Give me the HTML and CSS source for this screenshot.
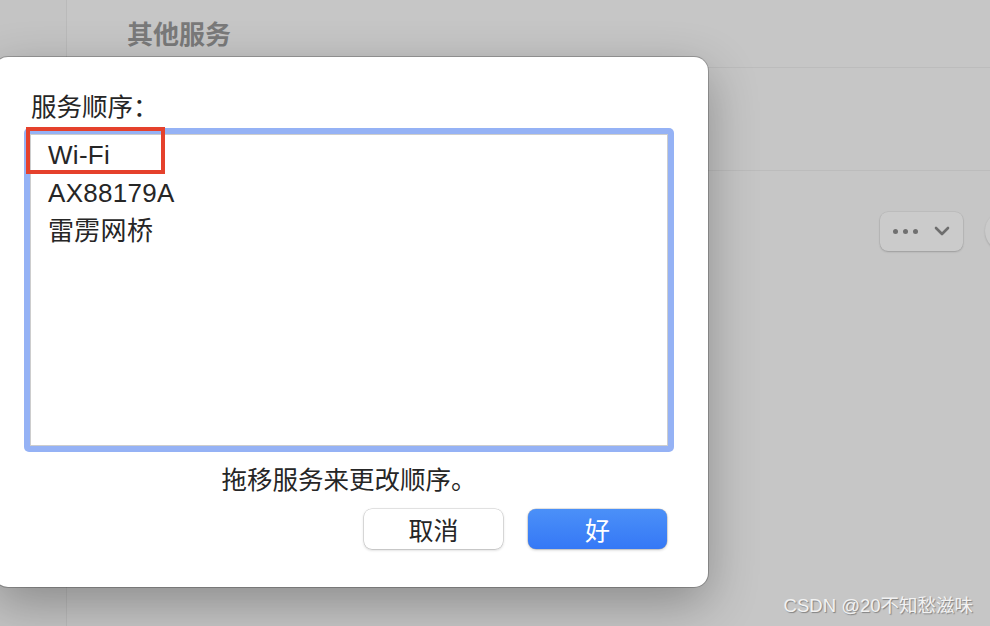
FILE: index.html
```html
<!DOCTYPE html>
<html lang="zh-CN">
<head>
    <meta charset="UTF-8">
    <meta name="viewport" content="width=device-width, initial-scale=1.0">
    <title>服务顺序</title>
    <link rel="stylesheet" href="styles.css">
</head>
<body>

    <div class="app">
        <div class="sidebar"></div>
        <div class="main">
            <div class="main-head">
                <h1>其他服务</h1>
            </div>
            <div class="row"></div>
            <div class="row-actions">
                <button class="more-btn">
                    <span class="dots"><i></i><i></i><i></i></span>
                    <svg width="16" height="10" viewBox="0 0 16 10"><path d="M2 2 L8 8 L14 2" fill="none" stroke="#6e6e6e" stroke-width="2.6" stroke-linecap="round" stroke-linejoin="round"/></svg>
                </button>
                <div class="help-btn"></div>
            </div>
        </div>
    </div>

    <!-- Feuille "ordre des services" -->
    <div class="sheet">
        <p class="sheet-title">服务顺序：</p>
        <div class="list-ring">
            <ul class="service-list">
                <li>Wi-Fi</li>
                <li>AX88179A</li>
                <li>雷雳网桥</li>
            </ul>
        </div>
        <p class="hint">拖移服务来更改顺序。</p>
        <div class="sheet-buttons">
            <button class="btn">取消</button>
            <button class="btn btn-primary">好</button>
        </div>
    </div>

    <div class="mark"></div>

    <div class="watermark">CSDN @20不知愁滋味</div>

</body>
</html>
```

FILE: styles.css
```css
body {
    margin: 0;
    width: 990px;
    height: 626px;
    overflow: hidden;
    position: relative;
    background-color: #c6c6c6;
    font-family: "Liberation Sans", "Noto Sans CJK SC", sans-serif;
    color: #262626;
}

.app {
    display: flex;
    height: 626px;
}

.sidebar {
    width: 66px;
    flex-shrink: 0;
    border-right: 1px solid #bababa;
    background-color: #c4c4c4;
}

.main {
    flex: 1;
    display: flex;
    flex-direction: column;
}

.main-head {
    height: 68px;
    box-sizing: border-box;
    padding: 17px 0 0 60px;
    border-bottom: 1px solid #bcbcbc;
}

.main-head h1 {
    margin: 0;
    font-family: "Noto Sans CJK SC", sans-serif;
    font-size: 26px;
    line-height: 32px;
    font-weight: bold;
    color: #7a7a7a;
}

.row {
    height: 102px;
    border-bottom: 1px solid #bcbcbc;
}

.row-actions {
    display: flex;
    justify-content: flex-end;
    align-items: center;
    gap: 22px;
    padding-top: 40px;
    margin-right: -35px;
}

.more-btn {
    width: 83px;
    height: 39px;
    border: none;
    border-radius: 8px;
    background-color: #cbcbcb;
    box-shadow: 0 1px 2px rgba(0, 0, 0, 0.18), 0 0 0 0.5px rgba(0, 0, 0, 0.08);
    display: flex;
    align-items: center;
    justify-content: center;
    gap: 16px;
    padding: 0;
}

.dots {
    display: flex;
    gap: 5px;
}

.dots i {
    width: 5px;
    height: 5px;
    border-radius: 50%;
    background-color: #707070;
}

.help-btn {
    width: 40px;
    height: 40px;
    flex-shrink: 0;
    border-radius: 50%;
    background-color: #cbcbcb;
    box-shadow: 0 1px 2px rgba(0, 0, 0, 0.18);
}

/* Feuille de dialogue */
.sheet {
    position: absolute;
    left: -6px;
    top: 57px;
    width: 714px;
    height: 530px;
    box-sizing: border-box;
    padding: 32px 34px 0 30px;
    background-color: #fff;
    border-radius: 14px;
    box-shadow: 0 0 0 1px rgba(0, 0, 0, 0.22), 0 16px 50px rgba(0, 0, 0, 0.3);
    font-family: "Noto Sans CJK SC", sans-serif;
}

.sheet-title {
    margin: 0 0 8px 7px;
    font-size: 25.5px;
    line-height: 31px;
}

.list-ring {
    height: 324px;
    box-sizing: border-box;
    padding: 6px;
    border-radius: 5px;
    background-color: #95b2f5;
}

.service-list {
    list-style: none;
    margin: 0;
    height: 100%;
    box-sizing: border-box;
    padding: 1px 0 0 17px;
    background-color: #fff;
    border: 1px solid #cdcdcd;
    font-family: "Liberation Sans", "Noto Sans CJK SC", sans-serif;
    font-size: 26px;
    line-height: 38px;
    letter-spacing: 0.3px;
}

.hint {
    margin: 10px 0 0;
    text-align: center;
    font-size: 25.5px;
    line-height: 31px;
}

.sheet-buttons {
    display: flex;
    justify-content: flex-end;
    gap: 25px;
    margin-top: 16px;
    padding-right: 7px;
}

.btn {
    width: 139px;
    height: 40px;
    border: none;
    border-radius: 8px;
    background-color: #fff;
    box-shadow: 0 0 0 0.5px rgba(0, 0, 0, 0.18), 0 1px 3px rgba(0, 0, 0, 0.22);
    font-family: "Noto Sans CJK SC", sans-serif;
    font-size: 25px;
    line-height: 40px;
    color: #262626;
    padding: 0;
}

.btn-primary {
    background-image: linear-gradient(to bottom, #4b90f8, #3578f6);
    color: #fff;
}

/* Cadre rouge d'annotation */
.mark {
    position: absolute;
    left: 26px;
    top: 127px;
    width: 139px;
    height: 47px;
    box-sizing: border-box;
    border: 4px solid #e5412c;
}

.watermark {
    position: absolute;
    right: 17px;
    bottom: 9px;
    font-family: "Liberation Sans", "Noto Sans CJK SC", sans-serif;
    font-size: 18.5px;
    line-height: 22px;
    color: #f2f2f2;
    text-shadow: 1px 1px 1px rgba(0, 0, 0, 0.35);
}
```
